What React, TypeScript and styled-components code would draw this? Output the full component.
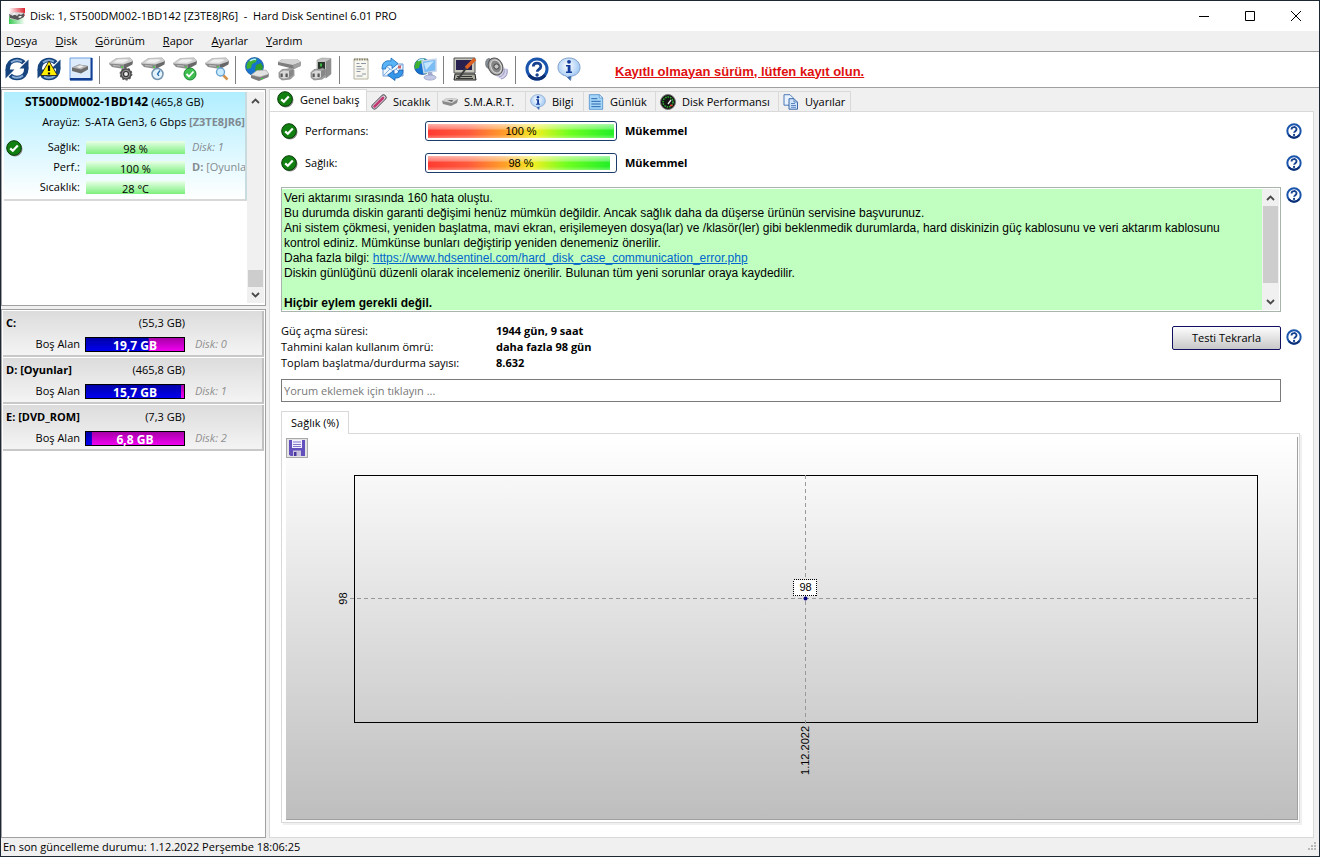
import React from "react";
import styled, { createGlobalStyle, css } from "styled-components";

const UI = `"Open Sans", "Noto Sans", sans-serif`;
const ARIAL = `"Liberation Sans", Arial, sans-serif`;

const GlobalStyle = createGlobalStyle`
  *, *::before, *::after { box-sizing: border-box; }
  body { margin: 0; font-family: ${UI}; font-size: 11px; line-height: 16px; color: #000; background: #f0f0f0; }
  button, input { font: inherit; color: inherit; margin: 0; }
  button { border: 0; background: none; padding: 0; }
  svg { display: block; }
`;

/* ---------- window frame ---------- */

const Window = styled.div`
  display: flex;
  flex-direction: column;
  min-height: 100vh;
  border: 1px solid #1c2733;
  background: #f0f0f0;
`;

const TitleBar = styled.header`
  display: flex;
  align-items: center;
  height: 30px;
  padding-left: 8px;
  background: #fff;
`;

const Title = styled.h1`
  flex: 1;
  margin: 0 0 0 5px;
  font-size: 11px;
  font-weight: 400;
  white-space: pre;
`;

const CaptionButton = styled.button`
  display: grid;
  place-items: center;
  width: 46px;
  height: 30px;
`;

const MenuBar = styled.nav`
  display: flex;
  gap: 18px;
  height: 21px;
  padding: 2px 5px;
  border-bottom: 1px solid #a0a0a0;
`;

const ToolBar = styled.div`
  display: flex;
  align-items: center;
  height: 36px;
  background: #fff;
  border-bottom: 1px solid #a0a0a0;
`;

const ToolButton = styled.button`
  width: 32px;
  height: 32px;
  padding: 3px 4px 5px;
`;

const ToolSeparator = styled.span`
  width: 8px;
  height: 28px;
  padding-left: 2px;
  &::before { content: ""; display: block; width: 1px; height: 100%; background: #808080; }
`;

const RegisterLink = styled.a`
  margin: 4px 0 0 30px;
  font: bold 13px/16px ${ARIAL};
  color: #e01010;
`;

const Body = styled.main`
  flex: 1;
  display: grid;
  grid-template-columns: 265px 1fr;
  gap: 3px;
  padding-top: 1px;
`;

const StatusBar = styled.footer`
  display: flex;
  justify-content: space-between;
  align-items: center;
  height: 18px;
  padding-left: 2px;
`;

/* ---------- left column ---------- */

const Sidebar = styled.aside`
  display: flex;
  flex-direction: column;
  gap: 3px;
`;

const Panel = styled.section`
  border: 1px solid #a0a0a0;
  background: #fff;
`;

const DiskPanel = styled(Panel)`
  display: flex;
  height: 217px;
  padding: 2px 1px 2px 2px;
`;

const DiskCard = styled.article`
  flex: 1;
  min-width: 0;
  height: 109px;
  border-right: 2px solid #c8dce0;
  border-bottom: 2px solid #d8d8d8;
  background: linear-gradient(#b0eeff, #fff);
  overflow: hidden;
`;

const DiskLine = styled.div<{ $gap?: boolean }>`
  display: grid;
  grid-template-columns: 20px 56px 105px 1fr;
  align-items: center;
  height: 20px;
  margin-top: ${(p) => (p.$gap ? 5 : 0)}px;
  white-space: nowrap;
  > svg { margin: 3px 0 0 2px; }
`;

const DiskTitle = styled.h2`
  margin: 0;
  padding-left: 21px;
  font-size: 12px;
  line-height: 20px;
  height: 20px;
  white-space: nowrap;
  small { font-size: 11px; font-weight: 400; }
`;

const RightLabel = styled.span`
  grid-column: 2;
  text-align: right;
`;

const Interface = styled.span`
  grid-column: 3;
  padding-left: 5px;
  b { color: #808890; }
`;

const MiniBar = styled.span`
  height: 13px;
  margin-left: 6px;
  background: linear-gradient(#eaffea, #7cf07c);
  text-align: center;
  line-height: 15px;
`;

const Note = styled.span<{ $italic?: boolean }>`
  padding-left: 7px;
  color: #858b8f;
  font-style: ${(p) => (p.$italic ? "italic" : "normal")};
`;

const VolumePanel = styled(Panel)`
  flex: 1;
  padding: 1px;
`;

const VolumeCard = styled.article`
  display: grid;
  grid-template-columns: 77px 105px 1fr;
  align-content: start;
  row-gap: 3px;
  height: 46px;
  margin-bottom: 1px;
  padding-top: 4px;
  border-right: 2px solid #c0c0c0;
  border-bottom: 2px solid #c8c8c8;
  background: linear-gradient(#dcdcdc, #f4f4f4);
`;

const VolumeHead = styled.h2`
  grid-column: 1 / 3;
  display: flex;
  justify-content: space-between;
  margin: 0;
  padding-left: 3px;
  font-size: 11px;
  line-height: 16px;
  small { font-size: 11px; font-weight: 400; }
`;

const VolumeLabel = styled.span`
  grid-column: 1;
  text-align: right;
  line-height: 20px;
`;

const UsageBar = styled.span<{ $used: number }>`
  height: 15px;
  margin: 3px 0 0 5px;
  border: 1px solid #000;
  text-align: center;
  font-size: 12px;
  font-weight: 700;
  line-height: 15px;
  color: #fff;
  background:
    linear-gradient(#0000a8, #0000f0) left / ${(p) => p.$used}% 100% no-repeat,
    linear-gradient(#a800a8, #f000f0);
`;

const VolumeNote = styled.span`
  padding-left: 10px;
  line-height: 20px;
  font-style: italic;
  color: #909090;
`;

/* ---------- scroll bar ---------- */

const ScrollTrack = styled.div<{ $top: number; $thumb: number }>`
  display: flex;
  flex-direction: column;
  justify-content: space-between;
  width: 17px;
  background:
    linear-gradient(#cdcdcd, #cdcdcd) 1px ${(p) => p.$top}px / 15px ${(p) => p.$thumb}px no-repeat,
    #f0f0f0;
`;

const ScrollArrow = styled.button`
  display: grid;
  place-items: center;
  width: 17px;
  height: 17px;
`;

/* ---------- right column ---------- */

const Content = styled.div`
  display: flex;
  flex-direction: column;
  padding-right: 5px;
  min-width: 0;
`;

const TabStrip = styled.div`
  display: flex;
  align-items: flex-end;
  height: 22px;
`;

const Tab = styled.button<{ $width: number; $active?: boolean }>`
  display: flex;
  align-items: center;
  gap: 6px;
  width: ${(p) => p.$width}px;
  height: 20px;
  padding-left: 4px;
  border: 1px solid #d9d9d9;
  border-width: 1px 1px 0 0;
  white-space: nowrap;
  ${(p) =>
    p.$active &&
    css`
      height: 23px;
      padding: 0 0 3px 7px;
      margin-bottom: -1px;
      border-left-width: 1px;
      background: #fff;
    `}
`;

const TabPage = styled.section`
  flex: 1;
  display: flex;
  flex-direction: column;
  padding: 3px 11px 14px;
  border: 1px solid #d9d9d9;
  background: #fff;
`;

const HelpRow = styled.div<{ $top?: number }>`
  display: grid;
  grid-template-columns: 1fr 16px;
  column-gap: 5px;
  align-items: start;
  margin-top: ${(p) => p.$top ?? 0}px;
`;

const HelpButton = styled.button<{ $drop?: number }>`
  width: 16px;
  height: 16px;
  margin-top: ${(p) => p.$drop ?? 0}px;
`;

const Metric = styled.div`
  display: grid;
  grid-template-columns: 24px 120px 192px 1fr;
  align-items: center;
  height: 32px;
  line-height: 18px;
  b { padding-left: 8px; }
`;

const Gauge = styled.div`
  height: 20px;
  padding: 2px;
  border: 1px solid #1c3c6c;
  border-radius: 3px;
  text-align: center;
  line-height: 15px;
  font-family: ${ARIAL};
`;

const GaugeFill = styled.div<{ $value: number }>`
  height: 14px;
  background:
    linear-gradient(rgba(255, 255, 255, 0.6), rgba(255, 255, 255, 0.3) 35%, transparent 45%, transparent 75%, rgba(255, 255, 255, 0.3)),
    linear-gradient(90deg, #ff3c32, #ff5a3c 22%, #ffa028 42%, #f0f020 58%, #70ff20 76%, #28f028 98%);
  background-size: ${(p) => p.$value}% 100%;
  background-repeat: no-repeat;
`;

const Advice = styled.div`
  display: flex;
  height: 125px;
  padding: 1px 1px 1px 0;
  border: 1px solid #a8b4ac;
  background: #fff;
`;

const AdviceText = styled.div`
  flex: 1;
  padding: 2px 8px 0 2px;
  background: #c0ffc0;
  font: 12px/15px ${ARIAL};
  p { margin: 0; }
  a { color: #0066cc; }
`;

const Facts = styled.dl`
  display: grid;
  grid-template-columns: 215px 1fr;
  margin: 0;
  dd { margin: 0; font-weight: 700; }
`;

const FactsRow = styled.div`
  display: flex;
  justify-content: space-between;
`;

const RetestButton = styled.button`
  width: 109px;
  height: 24px;
  margin-top: 3px;
  border: 1px solid #101060;
  border-radius: 2px;
  background: linear-gradient(#fdfdfd, #c8c8c8);
`;

const CommentInput = styled.input`
  width: 100%;
  height: 23px;
  padding: 0 2px;
  border: 1px solid #7a7a7a;
  background: #fff;
  &::placeholder { color: #777; opacity: 1; }
`;

const ChartTab = styled.button`
  align-self: flex-start;
  width: 68px;
  height: 23px;
  margin: 9px 0 -1px;
  border: 1px solid #d9d9d9;
  border-bottom: 0;
  background: #fff;
  z-index: 1;
`;

const ChartFrame = styled.section`
  flex: 1;
  display: flex;
  margin-right: 2px;
  padding: 3px 1px 2px 4px;
  border: 1px solid #d9d9d9;
  box-shadow: 2px 2px 0 #f0f0f0;
`;

const ChartSurface = styled.div`
  flex: 1;
  display: flex;
  flex-direction: column;
  min-height: 300px;
  border-right: 1px solid #a0a0a0;
  border-bottom: 1px solid #a0a0a0;
  background: linear-gradient(#fff, #bebebe);
`;

const SaveButton = styled.button`
  display: grid;
  place-items: center;
  width: 22px;
  height: 20px;
  margin-top: 1px;
  border: 1px solid #a8a8a8;
  background: #e4e4e4;
`;

const Plot = styled.svg`
  flex: 1;
  align-self: stretch;
  height: 0;
  width: auto;
  margin: 17px 40px 97px 68px;
  overflow: visible;
  font: 11px ${ARIAL};
`;

/* ---------- icons ---------- */

const Check = () => (
  <svg width="17" height="17" viewBox="0 0 17 17">
    <circle cx="9" cy="9" r="7.5" fill="#8a8a8a" />
    <circle cx="8" cy="8" r="7.3" fill="#118011" stroke="#063c06" />
    <path d="M4.2 8.4 6.8 10.8 11.8 5.4" fill="none" stroke="#fff" strokeWidth="2.2" />
  </svg>
);

const Help = ({ size = 16 }: { size?: number }) => (
  <svg width={size} height={size} viewBox="0 0 24 24">
    <circle cx="12" cy="12" r="10" fill="#fff" stroke="#1a55ad" strokeWidth="3" />
    <path d="M4 18a10 10 0 0 0 16 0" fill="none" stroke="#0c2f73" strokeWidth="3" />
    <path d="M8.3 9.6C8.3 4.9 15.8 5 15.8 9.4c0 2.8-3.6 2.9-3.6 5.4" fill="none" stroke="#16428f" strokeWidth="2.8" />
    <circle cx="12.1" cy="18" r="1.7" fill="#16428f" />
  </svg>
);

const Info = ({ size = 24 }: { size?: number }) => (
  <svg width={size} height={size} viewBox="0 0 24 24">
    <defs>
      <radialGradient id="bubble" cx="45%" cy="35%">
        <stop offset="0" stopColor="#fff" />
        <stop offset="1" stopColor="#a9cdf5" />
      </radialGradient>
    </defs>
    <path d="M12 1C5.500 1 1 5 1 10.500c0 4.500 3.500 7.500 8 8.500l4.500 4.500.8-4.300C19.500 18.500 23 15 23 10.500 23 5 18.500 1 12 1Z" fill="url(#bubble)" stroke="#7d9fcb" />
    <path d="M14 19l-.6 4.400L10 20" fill="#3a64a8" />
    <circle cx="12" cy="4.800" r="1.900" fill="#123c9c" />
    <path d="M9 8h4.500v6.500H15V16H9v-1.500h1.700V9.500H9Z" fill="#123c9c" />
  </svg>
);

const SyncArm = () => (
  <>
    <path d="M2.800 13.500C2 7 6.500 3 12 3c3.200 0 5.200 1 6.800 2.800" fill="none" stroke="#16447e" strokeWidth="4.400" />
    <path d="M6 5.500C9 3 13 2.500 17 4.600" fill="none" stroke="#86acd6" strokeWidth="2" />
    <path d="M23.500 2.500v9h-9Z" fill="#16447e" />
  </>
);

const SyncShape = () => (
  <>
    <SyncArm />
    <g transform="rotate(180 12 12)"><SyncArm /></g>
  </>
);

const DriveShape = () => (
  <>
    <path d="M0 6.500 7 1.500 21 .8l3 3.500-6 4L2 8.500Z" fill="#d2d2d2" stroke="#a2a2a2" strokeWidth=".6" />
    <path d="M4 5.500 9 2.600l9-.4 1 1.300-5 2.300Z" fill="#f0f0f0" />
    <path d="M0 6.500 14.500 7.500l.5 4.500L3 10Z" fill="#8b8b8b" />
    <path d="m14.500 7.500 9.500-3.200-.6 3.200L15 12Z" fill="#686868" />
    <path d="M4 8.500l7 .7" stroke="#d0d0d0" strokeWidth=".8" />
    <path d="M12 9.500h2v1.200h-2z" fill="#42d63c" />
  </>
);

const PlugShape = () => (
  <>
    <path d="m2 15.500 3-3 6-.5 2.500-1 3.500 2v5.500l-3.500 3.500-8.500 1-3-2.500Z" fill="#a4a4a4" stroke="#7b7b7b" strokeWidth=".7" />
    <path d="m3 15.500 4-2 5 .5v6l-5 1.500-4-1.500Z" fill="#d8d8d8" />
    <path d="m12 14 4-1.500V18l-4 3Z" fill="#878787" />
    <path d="M3.500 16.500h2.200v3.500H3.500zM8.500 16.500h2.200v3.500H8.500z" fill="#555" />
  </>
);

const GlobeShape = ({ r = 8.5 }: { r?: number }) => (
  <>
    <circle cx="9.500" cy="9.500" r={r} fill="#1674cf" stroke="#0b4a94" strokeWidth=".7" />
    <path d="M3 5c2-3 6-4 9-3l-1 3-4 2-1 4-4 1c-1-3 0-5 1-7Z" fill="#3fb02f" />
    <path d="M11 8l5-2 2 4-2 5-4 2-2-4Z" fill="#2f9c2c" />
    <path d="M5 4c2-1.600 4-2 6-1.500" fill="none" stroke="#b6ecff" strokeWidth="1.500" />
  </>
);

const PageShape = () => (
  <>
    <path d="M2 1h15l5 5v17H2Z" fill="#a5d6f8" stroke="#4a8ccb" strokeWidth="1.200" />
    <path d="M17 1v5h5Z" fill="#e4f3ff" stroke="#4a8ccb" />
    <path d="M5 7h9M5 11h14M5 15h14M5 19h14" stroke="#2a67ad" strokeWidth="1.500" />
  </>
);

type ToolName =
  | "sync" | "warn" | "disk" | "driveGear" | "driveClock" | "driveOk" | "driveFind"
  | "globeDrive" | "plug" | "plugPc" | "report" | "mail" | "network" | "screen" | "sound" | "help" | "info";

const toolArt: Record<ToolName, React.ReactNode> = {
  sync: <SyncShape />,
  warn: (
    <>
      <SyncShape />
      <path d="M12 4 20.500 18.500h-17Z" fill="#ffee00" stroke="#222" strokeWidth=".9" />
      <path d="M12 8.500v5.500M12 15.500v2" stroke="#000" strokeWidth="2.200" />
    </>
  ),
  disk: (
    <>
      <path d="M1 1h22v22H1Z" fill="#dcecfc" stroke="#6f9fe0" strokeWidth="1" />
      <path d="M1 21h22.500v2.500H1zM21.500 1h2v22h-2z" fill="#123f94" />
      <path d="m3 10.500 7-3 9 1.500v3.500l-7 4-9-2.500Z" fill="#6c6c6c" />
      <path d="m3 10.500 7-3 9 1.500-7 3.500Z" fill="#b5b5b5" />
      <path d="m7 10 4-1.500 4 .8-4 1.700Z" fill="#f0f0f0" />
    </>
  ),
  driveGear: (
    <>
      <DriveShape />
      <circle cx="17" cy="17" r="5" fill="#8d8d8d" stroke="#4c4c4c" strokeWidth="1.500" />
      <circle cx="17" cy="17" r="5.800" fill="none" stroke="#555" strokeWidth="1.200" strokeDasharray="2 1.600" />
      <circle cx="17" cy="17" r="2.500" fill="#eee" stroke="#333" strokeWidth="1.200" />
    </>
  ),
  driveClock: (
    <>
      <DriveShape />
      <circle cx="16.500" cy="17" r="5.500" fill="#e4f4ff" stroke="#7392ae" strokeWidth="1.500" />
      <path d="M19 13.500 16.500 17l1.500 1.800" fill="none" stroke="#276da8" strokeWidth="1.300" />
    </>
  ),
  driveOk: (
    <>
      <DriveShape />
      <circle cx="17" cy="17" r="6" fill="#3fbe50" stroke="#1b8735" />
      <path d="m13.500 17 2.500 2.500 4.500-5" fill="none" stroke="#fff" strokeWidth="1.800" />
    </>
  ),
  driveFind: (
    <>
      <DriveShape />
      <path d="m18 18 4.500 4.500" stroke="#d2924a" strokeWidth="2.500" />
      <circle cx="15.500" cy="15" r="4" fill="#c9ecff" stroke="#6aa4d4" strokeWidth="1.400" />
    </>
  ),
  globeDrive: (
    <>
      <GlobeShape r={9} />
      <path d="m6 18 6-4.500 9-.5 3 4-.5 3L14 24l-8-3Z" fill="#7c7c7c" />
      <path d="m6 18 6-4.500 9-.5 3 4-9 3Z" fill="#e2e2e2" stroke="#aaa" strokeWidth=".6" />
      <path d="M16 21h2v1.300h-2z" fill="#42d63c" />
    </>
  ),
  plug: (
    <>
      <path d="m1 5 4-3 15 0 4 3-.5 4-6.500 3L1 8Z" fill="#7e7e7e" />
      <path d="m1 5 4-3 15 0 4 3-8 3Z" fill="#d4d4d4" />
      <path d="m16 8 8-3-.5 4-6.500 3Z" fill="#a0a0a0" />
      <PlugShape />
    </>
  ),
  plugPc: (
    <>
      <path d="m8 3 5-2 9 .5V17l-5 4-9-4Z" fill="#c2c2c2" stroke="#999" strokeWidth=".6" />
      <path d="m17 4.500 5-3V17l-5 4Z" fill="#8e8e8e" />
      <path d="M9 5h7v7H9z" fill="#27352a" />
      <path d="M11 6.500h2v3h-2z" fill="#39b53f" />
      <PlugShape />
    </>
  ),
  report: (
    <>
      <path d="M5 2h14v20H5Z" fill="#f8f7ef" stroke="#b5b39f" />
      <path d="M5 2.500h14" stroke="#8a886f" strokeWidth="2" strokeDasharray="1.500 1" />
      <path d="M7.500 6.500h3M12 6.500h5M7.500 9.500h5M7.500 12h8M7.500 14.500h4M13 17h4M7.500 19h6" stroke="#8d97a4" />
    </>
  ),
  mail: (
    <>
      <path d="M2 7h20v12H2Z" fill="#eef6ff" stroke="#6d9ed6" />
      <path d="m2 7 10 7L22 7M2 19l7-7m6 0 7 7" fill="none" stroke="#84afe0" />
      <path d="M17 8.500h3v3h-3z" fill="#c66" />
      <path d="M1 12C1 5 5 3 10 4V1l7 5.500-6 5V8.500C7 7.500 5 9 4.500 12Z" fill="#58b4f5" stroke="#1a69bd" strokeWidth=".8" />
      <path d="M22 13c0 6-4 8.500-8 8v2.500L6.500 18l6.500-4.500V17c3 .5 4.500-1 5-4Z" fill="#3597ea" stroke="#1a5fb0" strokeWidth=".8" />
    </>
  ),
  network: (
    <>
      <GlobeShape r={8} />
      <path d="m9 4 14-2v12L11 16Z" fill="#7bbcf4" stroke="#c9d6ea" strokeWidth="1.500" />
      <path d="m11 6 10-2-8 9Z" fill="#c5e6ff" />
      <path d="M15 15h4l1 4-5 1Z" fill="#a4afd0" />
      <ellipse cx="17" cy="20.500" rx="6" ry="2.600" fill="#c3c9e6" stroke="#8c95bd" strokeWidth=".7" />
    </>
  ),
  screen: (
    <>
      <path d="M1 1h21v15H1Z" fill="#c7c7bd" stroke="#555" />
      <path d="M3 3h16v10H3Z" fill="#28204f" />
      <path d="M2 17h20l1 6H1Z" fill="#a9a9a0" stroke="#222" />
      <path d="M4 19.500h15M3 21.500h17" stroke="#333" />
      <path d="m5 22 9-12" stroke="#3d3d3d" strokeWidth="2" />
      <path d="m13 11 9-9" stroke="#dc5f21" strokeWidth="3.500" />
    </>
  ),
  sound: (
    <>
      <path d="m14 8 8 4c2 5-1 10-6 10l-5-3Z" fill="#d4d3e8" />
      <path d="M19 12c1 4-1 7-5 8M22 12c1 6-2 9-6 10" fill="none" stroke="#9a97c3" />
      <ellipse cx="3.800" cy="6.500" rx="3.200" ry="5" fill="#8a929c" stroke="#666" strokeWidth=".7" />
      <ellipse cx="10.500" cy="9.500" rx="7" ry="8.800" transform="rotate(-25 10.500 9.500)" fill="#a8a8a8" stroke="#555" />
      <ellipse cx="11" cy="9.500" rx="5" ry="6.800" transform="rotate(-25 11 9.500)" fill="#858585" stroke="#ddd" />
      <circle cx="11.500" cy="9.500" r="2.600" fill="#c4c4c4" stroke="#444" />
    </>
  ),
  help: null,
  info: null,
};

const ToolIcon = ({ name }: { name: ToolName }) => {
  if (name === "help") return <Help size={24} />;
  if (name === "info") return <Info />;
  return <svg width="24" height="24" viewBox="0 0 24 24">{toolArt[name]}</svg>;
};

const AppIcon = () => (
  <svg width="16" height="16" viewBox="0 0 16 16">
    <defs>
      <linearGradient id="appRed"><stop offset="0" stopColor="#fff" /><stop offset="1" stopColor="#dc2430" /></linearGradient>
      <linearGradient id="appGreen"><stop offset="0" stopColor="#38c850" /><stop offset="1" stopColor="#fff" /></linearGradient>
    </defs>
    <path d="M0 0h16v8H0Z" fill="url(#appRed)" />
    <path d="M0 8h16v8H0Z" fill="url(#appGreen)" />
    <path d="m0 6 5-2 11 1-1 4-6 3-8-1Z" fill="#d9d9d9" />
    <path d="m0 6 4 2 1-2 3 2 2-2 2 1 3-2v4l-6 3-8-2Z" fill="#565656" />
    <path d="m3 6 2-1 2 1-2 1Zm6 3 2-1 2 0-2 2Z" fill="#fff" />
  </svg>
);

const Thermometer = () => (
  <svg width="16" height="16" viewBox="0 0 16 16">
    <path d="M3.500 12.500 12.500 3.500" stroke="#4c4650" strokeWidth="6" strokeLinecap="round" />
    <path d="M3.500 12.500 12.500 3.500" stroke="#d9d3dc" strokeWidth="4.400" strokeLinecap="round" />
    <path d="M3.500 12.500 12 4" stroke="#c23a72" strokeWidth="2.600" strokeLinecap="round" />
  </svg>
);

const SmartDrive = () => (
  <svg width="16" height="16" viewBox="0 0 16 16">
    <path d="m0 7 5-3 11 1-1 4-6 3-8-2Z" fill="#8a8a8a" />
    <path d="m0 7 5-3 11 1-6 4Z" fill="#d4d4d4" />
    <path d="m5 6 5 2 1-2Z" fill="#666" />
  </svg>
);

const Speed = () => (
  <svg width="16" height="16" viewBox="0 0 16 16">
    <circle cx="8" cy="8" r="7.500" fill="#141414" stroke="#777" />
    <circle cx="8" cy="8" r="5" fill="none" stroke="#2db836" strokeWidth="1.500" strokeDasharray="1.500 1" />
    <path d="m8 10 3-4" stroke="#eee" strokeWidth="1.300" />
    <path d="M10 11.500h2.500" stroke="#f33" strokeWidth="1.500" />
  </svg>
);

const Copies = () => (
  <svg width="16" height="16" viewBox="0 0 16 16">
    <path d="M1 .7h6l3 3v7.500H1Z" fill="#e9f3ff" stroke="#4e79b5" />
    <path d="M6 4.700h5l3.500 3.500v7H6Z" fill="#d2e5fc" stroke="#3a68a8" />
    <path d="M11 4.700V8h3.500M8 9.500h4M8 11.500h5M8 13.300h5" fill="none" stroke="#5b87c4" />
  </svg>
);

const LogPage = () => (
  <svg width="16" height="16" viewBox="0 0 24 24"><PageShape /></svg>
);

const Floppy = () => (
  <svg width="16" height="16" viewBox="0 0 16 16">
    <path d="M0 0h16v16H1.500L0 14.500Z" fill="#6350bc" />
    <path d="M3 0h10v8H3Z" fill="#f3f1ff" />
    <path d="M4 2h8M4 4.500h8M4 6.500h8" stroke="#8577cc" />
    <path d="M4 10.500h8V16H4Z" fill="#c8c4e0" />
    <path d="M5 12h2.500v4H5z" fill="#4a379e" />
  </svg>
);

const Arrow = ({ up }: { up?: boolean }) => (
  <svg width="9" height="6" viewBox="0 0 9 6">
    <path d={up ? "M1 5 4.500 1.500 8 5" : "M1 1 4.500 4.500 8 1"} fill="none" stroke="#4a4a4a" strokeWidth="1.800" />
  </svg>
);

/* ---------- data ---------- */

const menus = [["D", "o", "sya"], ["", "D", "isk"], ["", "G", "örünüm"], ["", "R", "apor"], ["", "A", "yarlar"], ["", "Y", "ardım"]];

const tools: { name: ToolName; label: string }[][] = [
  [{ name: "sync", label: "Yenile" }, { name: "warn", label: "Uyarı" }, { name: "disk", label: "Disk" }],
  [{ name: "driveGear", label: "Disk ayarı" }, { name: "driveClock", label: "Kısa test" }, { name: "driveOk", label: "Uzun test" }, { name: "driveFind", label: "Yüzey testi" }],
  [{ name: "globeDrive", label: "Çevrimiçi" }, { name: "plug", label: "Bağlantı" }, { name: "plugPc", label: "Kasa" }],
  [{ name: "report", label: "Rapor" }, { name: "mail", label: "Rapor gönder" }, { name: "network", label: "Ağ" }],
  [{ name: "screen", label: "Ayarlar" }, { name: "sound", label: "Ses" }],
  [{ name: "help", label: "Yardım" }, { name: "info", label: "Hakkında" }],
];

const tabs = [
  { label: "Genel bakış", width: 98, icon: <Check /> },
  { label: "Sıcaklık", width: 71, icon: <Thermometer /> },
  { label: "S.M.A.R.T.", width: 88, icon: <SmartDrive /> },
  { label: "Bilgi", width: 58, icon: <Info size={16} /> },
  { label: "Günlük", width: 72, icon: <LogPage /> },
  { label: "Disk Performansı", width: 123, icon: <Speed /> },
  { label: "Uyarılar", width: 72, icon: <Copies /> },
];

const volumes = [
  { name: "C:", size: "(55,3 GB)", free: "19,7 GB", used: 64, disk: "Disk: 0" },
  { name: "D: [Oyunlar]", size: "(465,8 GB)", free: "15,7 GB", used: 97, disk: "Disk: 1" },
  { name: "E: [DVD_ROM]", size: "(7,3 GB)", free: "6,8 GB", used: 6, disk: "Disk: 2" },
];

const metrics = [
  { label: "Performans:", value: 100 },
  { label: "Sağlık:", value: 98 },
];

const Scroll = ({ top, thumb }: { top: number; thumb: number }) => (
  <ScrollTrack $top={top} $thumb={thumb}>
    <ScrollArrow aria-label="Yukarı"><Arrow up /></ScrollArrow>
    <ScrollArrow aria-label="Aşağı"><Arrow /></ScrollArrow>
  </ScrollTrack>
);

const HealthChart = () => (
  <Plot role="img" aria-label="Sağlık grafiği">
    <rect width="100%" height="100%" fill="none" stroke="#000" shapeRendering="crispEdges" />
    <g stroke="#999" strokeDasharray="4 3" shapeRendering="crispEdges">
      <line x1="-4" x2="100%" y1="50%" y2="50%" />
      <line x1="50%" x2="50%" y1="0" y2="101%" />
    </g>
    <svg x="0" y="50%" overflow="visible">
      <text transform="translate(-7 0) rotate(-90)" textAnchor="middle">98</text>
    </svg>
    <svg x="50%" y="100%" overflow="visible">
      <text transform="translate(3 4) rotate(-90)" textAnchor="end">1.12.2022</text>
    </svg>
    <svg x="50%" y="50%" overflow="visible">
      <rect x="-12" y="-19" width="23" height="16" fill="#fff" stroke="#000" strokeDasharray="1 1" shapeRendering="crispEdges" />
      <text y="-8" textAnchor="middle">98</text>
      <circle r="2" fill="#000080" />
    </svg>
  </Plot>
);

export default function App() {
  return (
    <Window>
      <GlobalStyle />
      <TitleBar>
        <AppIcon />
        <Title>{"Disk: 1, ST500DM002-1BD142 [Z3TE8JR6]  -  Hard Disk Sentinel 6.01 PRO"}</Title>
        <CaptionButton aria-label="Simge durumuna küçült">
          <svg width="10" height="10"><path d="M0 5.500h10" stroke="#000" /></svg>
        </CaptionButton>
        <CaptionButton aria-label="Ekranı kapla">
          <svg width="10" height="10"><path d="M.5.5h9v9h-9Z" fill="none" stroke="#000" /></svg>
        </CaptionButton>
        <CaptionButton aria-label="Kapat">
          <svg width="10" height="10"><path d="m0 0 10 10M10 0 0 10" stroke="#000" /></svg>
        </CaptionButton>
      </TitleBar>
      <MenuBar>
        {menus.map(([a, key, b]) => (
          <button key={key + b}>{a}<u>{key}</u>{b}</button>
        ))}
      </MenuBar>
      <ToolBar>
        {tools.map((group, i) => (
          <React.Fragment key={i}>
            {i > 0 && <ToolSeparator />}
            {group.map((t) => (
              <ToolButton key={t.name} aria-label={t.label}><ToolIcon name={t.name} /></ToolButton>
            ))}
          </React.Fragment>
        ))}
        <RegisterLink href="#kayit">Kayıtlı olmayan sürüm, lütfen kayıt olun.</RegisterLink>
      </ToolBar>
      <Body>
        <Sidebar>
          <DiskPanel>
            <DiskCard>
              <DiskTitle>ST500DM002-1BD142 <small>(465,8 GB)</small></DiskTitle>
              <DiskLine>
                <RightLabel>Arayüz:</RightLabel>
                <Interface>S-ATA Gen3, 6 Gbps <b>[Z3TE8JR6]</b></Interface>
              </DiskLine>
              <DiskLine $gap>
                <Check />
                <RightLabel>Sağlık:</RightLabel>
                <MiniBar>98 %</MiniBar>
                <Note $italic>Disk: 1</Note>
              </DiskLine>
              <DiskLine>
                <RightLabel>Perf.:</RightLabel>
                <MiniBar>100 %</MiniBar>
                <Note><b>D:</b> [Oyunlar]</Note>
              </DiskLine>
              <DiskLine>
                <RightLabel>Sıcaklık:</RightLabel>
                <MiniBar>28 °C</MiniBar>
              </DiskLine>
            </DiskCard>
            <Scroll top={178} thumb={17} />
          </DiskPanel>
          <VolumePanel>
            {volumes.map((v) => (
              <VolumeCard key={v.name}>
                <VolumeHead>{v.name}<small>{v.size}</small></VolumeHead>
                <VolumeLabel>Boş Alan</VolumeLabel>
                <UsageBar $used={v.used}>{v.free}</UsageBar>
                <VolumeNote>{v.disk}</VolumeNote>
              </VolumeCard>
            ))}
          </VolumePanel>
        </Sidebar>
        <Content>
          <TabStrip role="tablist">
            {tabs.map((t, i) => (
              <Tab key={t.label} role="tab" aria-selected={i === 0} $width={t.width} $active={i === 0}>
                {t.icon}{t.label}
              </Tab>
            ))}
          </TabStrip>
          <TabPage>
            {metrics.map((m) => (
              <HelpRow key={m.label}>
                <Metric>
                  <Check />
                  <span>{m.label}</span>
                  <Gauge><GaugeFill $value={m.value}>{m.value} %</GaugeFill></Gauge>
                  <b>Mükemmel</b>
                </Metric>
                <HelpButton $drop={8} aria-label="Yardım"><Help /></HelpButton>
              </HelpRow>
            ))}
            <HelpRow $top={8}>
              <Advice>
                <AdviceText>
                  <p>Veri aktarımı sırasında 160 hata oluştu.</p>
                  <p>Bu durumda diskin garanti değişimi henüz mümkün değildir. Ancak sağlık daha da düşerse ürünün servisine başvurunuz.</p>
                  <p>Ani sistem çökmesi, yeniden başlatma, mavi ekran, erişilemeyen dosya(lar) ve /klasör(ler) gibi beklenmedik durumlarda, hard diskinizin güç kablosunu ve veri aktarım kablosunu kontrol ediniz. Mümkünse bunları değiştirip yeniden denemeniz önerilir.</p>
                  <p>Daha fazla bilgi: <a href="https://www.hdsentinel.com/hard_disk_case_communication_error.php">https://www.hdsentinel.com/hard_disk_case_communication_error.php</a></p>
                  <p>Diskin günlüğünü düzenli olarak incelemeniz önerilir. Bulunan tüm yeni sorunlar oraya kaydedilir.</p>
                  <br />
                  <p><b>Hiçbir eylem gerekli değil.</b></p>
                </AdviceText>
                <Scroll top={17} thumb={77} />
              </Advice>
              <HelpButton aria-label="Yardım"><Help /></HelpButton>
            </HelpRow>
            <HelpRow $top={11}>
              <FactsRow>
                <Facts>
                  <dt>Güç açma süresi:</dt><dd>1944 gün, 9 saat</dd>
                  <dt>Tahmini kalan kullanım ömrü:</dt><dd>daha fazla 98 gün</dd>
                  <dt>Toplam başlatma/durdurma sayısı:</dt><dd>8.632</dd>
                </Facts>
                <RetestButton>Testi Tekrarla</RetestButton>
              </FactsRow>
              <HelpButton $drop={6} aria-label="Yardım"><Help /></HelpButton>
            </HelpRow>
            <HelpRow $top={8}>
              <CommentInput aria-label="Yorum" placeholder="Yorum eklemek için tıklayın ..." />
            </HelpRow>
            <ChartTab role="tab" aria-selected>Sağlık (%)</ChartTab>
            <ChartFrame>
              <ChartSurface>
                <SaveButton aria-label="Kaydet"><Floppy /></SaveButton>
                <HealthChart />
              </ChartSurface>
            </ChartFrame>
          </TabPage>
        </Content>
      </Body>
      <StatusBar>
        <span>En son güncelleme durumu: 1.12.2022 Perşembe 18:06:25</span>
        <svg width="12" height="12" fill="#b8b8b8">
          <path d="M7 1h2v2H7zM4 4h2v2H4zM7 4h2v2H7zM1 7h2v2H1zM4 7h2v2H4zM7 7h2v2H7z" />
        </svg>
      </StatusBar>
    </Window>
  );
}
